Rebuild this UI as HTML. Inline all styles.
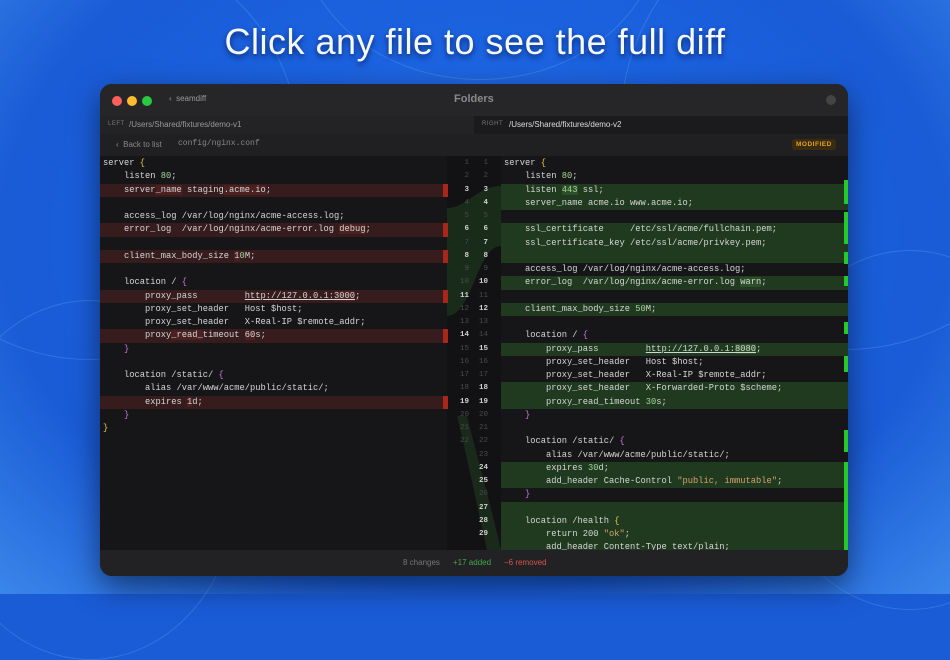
<!DOCTYPE html>
<html><head><meta charset="utf-8"><style>
*{margin:0;padding:0;box-sizing:border-box}
html{background:#1a5bd6}
body{width:950px;height:594px;overflow:hidden;position:relative;font-family:"Liberation Sans",sans-serif;
background:radial-gradient(ellipse at 50% 40%,#2a6fe8 0%,#1b62e0 40%,#1a5bd6 70%,#3a86ea 100%);}
.bgc{position:absolute;border-radius:50%;border:1px solid rgba(120,190,255,.25)}
h1{position:absolute;top:21px;left:0;width:950px;text-align:center;color:#f4f8ff;font-weight:400;font-size:36px;letter-spacing:0.5px;text-shadow:0 3px 6px rgba(0,0,40,.6)}
.win{position:absolute;left:100px;top:84px;width:748px;height:492px;background:#1a1a1c;border-radius:12px;overflow:hidden;box-shadow:0 10px 30px rgba(0,0,0,.5)}
.tb{position:absolute;left:0;top:0;width:748px;height:32px;background:#262628}
.dot{position:absolute;top:12px;width:10px;height:10px;border-radius:50%}
.pb{position:absolute;top:32px;height:18px;left:0;width:748px;background:#232325;font-size:8px;color:#ccc}
.sb{position:absolute;top:50px;height:22px;left:0;width:748px;background:#202022;font-size:8px;color:#888}
.code{position:absolute;top:72px;left:0;width:748px;height:394px;background:#161618;font-family:"Liberation Mono",monospace;font-size:8.75px;color:#d6d6d6}
.r{position:absolute;height:13.25px;line-height:13.25px;white-space:pre}
.L{left:0;width:347px;padding-left:3px}
.R{left:401px;width:347px;padding-left:3px}
.del{background:#361c1c}
.add{background:#1f3a1f}
.n{position:absolute;width:14px;text-align:right;font-size:7.5px;color:#4a4a4e;line-height:13.25px;height:13.25px}
.n1{left:355px}.n2{left:374px}
.b{color:#d0d0d0;font-weight:bold}
.rm{position:absolute;left:343px;width:5px;height:13.25px;background:#a8261c}
.gm{position:absolute;left:744px;width:4px;background:#28c828}
.y{color:#e8c64a}.p{color:#c678dd}.g{color:#a6d49a}.s{color:#d8a070}
.hr{background:#4a2020}.hg{background:#2b4f27}
.ft{position:absolute;top:466px;left:0;width:748px;height:26px;background:#222224;font-size:8px;line-height:26px}
</style></head><body>
<div class="bgc" style="left:-120px;top:-60px;width:420px;height:420px"></div>
<div class="bgc" style="left:620px;top:-100px;width:450px;height:450px"></div>
<div class="bgc" style="left:300px;top:-220px;width:360px;height:300px"></div>
<div class="bgc" style="left:-60px;top:300px;width:300px;height:360px"></div>
<div class="bgc" style="left:760px;top:250px;width:300px;height:360px"></div>
<h1>Click any file to see the full diff</h1>
<div class="win">
<div class="tb">
<div class="dot" style="left:12px;background:#fe5f57"></div>
<div class="dot" style="left:27px;background:#febc2e"></div>
<div class="dot" style="left:42px;background:#28c840"></div>
<div style="position:absolute;left:69px;top:10px;font-size:8px;color:#999">‹&nbsp; seamdiff</div>
<div style="position:absolute;left:354px;top:9px;font-size:11px;font-weight:bold;color:#8a8a8e">Folders</div>
<div style="position:absolute;left:726px;top:11px;width:10px;height:10px;border-radius:50%;background:#444"></div>
</div>
<div class="pb">
<span style="position:absolute;left:8px;top:5px;font-size:6px;color:#777;letter-spacing:.5px">LEFT</span>
<span style="position:absolute;left:29px;top:4px;color:#999">/Users/Shared/fixtures/demo-v1</span>
<div style="position:absolute;left:374px;top:0;width:374px;height:18px;background:#1b1b1d"></div>
<span style="position:absolute;left:382px;top:5px;font-size:6px;color:#777;letter-spacing:.5px">RIGHT</span>
<span style="position:absolute;left:409px;top:4px;color:#ddd">/Users/Shared/fixtures/demo-v2</span>
</div>
<div class="sb">
<span style="position:absolute;left:16px;top:6px">‹&nbsp; Back to list</span>
<span style="position:absolute;left:78px;top:5px;font-family:'Liberation Mono',monospace">config/nginx.conf</span>
<span style="position:absolute;left:692px;top:5px;background:#3a2c10;color:#e8a020;font-size:6.5px;font-weight:bold;padding:2px 4px;border-radius:3px;letter-spacing:.5px">MODIFIED</span>
</div>
<div class="code">
<div style="position:absolute;left:347px;top:0;width:54px;height:394px;background:#121214"></div>
<svg style="position:absolute;left:347px;top:0" width="54" height="394"><path d="M0 52 C20 52 30 30 54 30 L54 90 C30 90 25 160 0 160 Z" fill="#1c331c" opacity=".8"/><path d="M10 260 C20 300 30 350 40 394 L54 394 C44 350 30 300 20 260Z" fill="#1c331c" opacity=".7"/></svg>
<div class="r L" style="top:1px"><span>server </span><span class="y">{</span></div>
<div class="r L" style="top:14.25px">    listen <span class="g">80</span>;</div>
<div class="r L del" style="top:27.5px">    server<span class="hr">_name</span> staging<span class="hr">.acme.io</span>;</div>
<div class="r L" style="top:54px">    access_log /var/log/nginx/acme-access.log;</div>
<div class="r L del" style="top:67.25px">    error_log  /var/log/nginx/acme-error.log <span class="hr">debug</span>;</div>
<div class="r L del" style="top:93.75px">    client_max_body_size <span class="hr">1</span><span class="g">0</span>M;</div>
<div class="r L" style="top:120.25px">    location / <span class="p">{</span></div>
<div class="r L del" style="top:133.5px">        proxy_pass         <u>http://127.0.0.1:<span class="hr">3000</span></u>;</div>
<div class="r L" style="top:146.75px">        proxy_set_header   Host $host;</div>
<div class="r L" style="top:160px">        proxy_set_header   X-Real-IP $remote_addr;</div>
<div class="r L del" style="top:173.25px">        proxy<span class="hr">_read_</span>timeout <span class="hr">60</span>s;</div>
<div class="r L" style="top:186.5px">    <span class="p">}</span></div>
<div class="r L" style="top:213px">    location /static/ <span class="p">{</span></div>
<div class="r L" style="top:226.25px">        alias /var/www/acme/public/static/;</div>
<div class="r L del" style="top:239.5px">        expires <span class="hr">1</span>d;</div>
<div class="r L" style="top:252.75px">    <span class="p">}</span></div>
<div class="r L" style="top:266px"><span class="y">}</span></div>
<div class="rm" style="top:27.5px"></div><div class="rm" style="top:67.25px"></div><div class="rm" style="top:93.75px"></div>
<div class="rm" style="top:133.5px"></div><div class="rm" style="top:173.25px"></div><div class="rm" style="top:239.5px"></div>
<div class="n n1" style="top:1px">1</div><div class="n n2" style="top:1px">1</div>
<div class="n n1" style="top:14.25px">2</div><div class="n n2" style="top:14.25px">2</div>
<div class="n n1 b" style="top:27.5px">3</div><div class="n n2 b" style="top:27.5px">3</div>
<div class="n n1" style="top:40.75px">4</div><div class="n n2 b" style="top:40.75px">4</div>
<div class="n n1" style="top:54px">5</div><div class="n n2" style="top:54px">5</div>
<div class="n n1 b" style="top:67.25px">6</div><div class="n n2 b" style="top:67.25px">6</div>
<div class="n n1" style="top:80.5px">7</div><div class="n n2 b" style="top:80.5px">7</div>
<div class="n n1 b" style="top:93.75px">8</div><div class="n n2 b" style="top:93.75px">8</div>
<div class="n n1" style="top:107px">9</div><div class="n n2" style="top:107px">9</div>
<div class="n n1" style="top:120.25px">10</div><div class="n n2 b" style="top:120.25px">10</div>
<div class="n n1 b" style="top:133.5px">11</div><div class="n n2" style="top:133.5px">11</div>
<div class="n n1" style="top:146.75px">12</div><div class="n n2 b" style="top:146.75px">12</div>
<div class="n n1" style="top:160px">13</div><div class="n n2" style="top:160px">13</div>
<div class="n n1 b" style="top:173.25px">14</div><div class="n n2" style="top:173.25px">14</div>
<div class="n n1" style="top:186.5px">15</div><div class="n n2 b" style="top:186.5px">15</div>
<div class="n n1" style="top:199.75px">16</div><div class="n n2" style="top:199.75px">16</div>
<div class="n n1" style="top:213px">17</div><div class="n n2" style="top:213px">17</div>
<div class="n n1" style="top:226.25px">18</div><div class="n n2 b" style="top:226.25px">18</div>
<div class="n n1 b" style="top:239.5px">19</div><div class="n n2 b" style="top:239.5px">19</div>
<div class="n n1" style="top:252.75px">20</div><div class="n n2" style="top:252.75px">20</div>
<div class="n n1" style="top:266px">21</div><div class="n n2" style="top:266px">21</div>
<div class="n n1" style="top:279.25px">22</div><div class="n n2" style="top:279.25px">22</div>
<div class="n n2" style="top:292.5px">23</div>
<div class="n n2 b" style="top:305.75px">24</div><div class="n n2 b" style="top:319px">25</div>
<div class="n n2" style="top:332.25px">26</div><div class="n n2 b" style="top:345.5px">27</div>
<div class="n n2 b" style="top:358.75px">28</div><div class="n n2 b" style="top:372px">29</div>
<div class="r R" style="top:1px">server <span class="y">{</span></div>
<div class="r R" style="top:14.25px">    listen <span class="g">80</span>;</div>
<div class="r R add" style="top:27.5px">    listen <span class="hg g">443</span> ssl;</div>
<div class="r R add" style="top:40.75px">    server_name acme.io www.acme.io;</div>
<div class="r R add" style="top:67.25px">    ssl_certificate     /etc/ssl/acme/fullchain.pem;</div>
<div class="r R add" style="top:80.5px">    ssl_certificate_key /etc/ssl/acme/privkey.pem;</div>
<div class="r R add" style="top:93.75px"> </div>
<div class="r R" style="top:107px">    access_log /var/log/nginx/acme-access.log;</div>
<div class="r R add" style="top:120.25px">    error_log  /var/log/nginx/acme-error.log <span class="hg">warn</span>;</div>
<div class="r R add" style="top:146.75px">    client_max_body_size <span class="g">50</span>M;</div>
<div class="r R" style="top:173.25px">    location / <span class="p">{</span></div>
<div class="r R add" style="top:186.5px">        proxy_pass         <u>http://127.0.0.1:<span class="hg">8080</span></u>;</div>
<div class="r R" style="top:199.75px">        proxy_set_header   Host $host;</div>
<div class="r R" style="top:213px">        proxy_set_header   X-Real-IP $remote_addr;</div>
<div class="r R add" style="top:226.25px">        proxy_set_header   X-Forwarded-Proto $scheme;</div>
<div class="r R add" style="top:239.5px">        proxy_read_timeout <span class="g">30</span>s;</div>
<div class="r R" style="top:252.75px">    <span class="p">}</span></div>
<div class="r R" style="top:279.25px">    location /static/ <span class="p">{</span></div>
<div class="r R" style="top:292.5px">        alias /var/www/acme/public/static/;</div>
<div class="r R add" style="top:305.75px">        expires <span class="g">30</span>d;</div>
<div class="r R add" style="top:319px">        add_header Cache-Control <span class="s">"public, immutable"</span>;</div>
<div class="r R" style="top:332.25px">    <span class="p">}</span></div>
<div class="r R add" style="top:345.5px"> </div>
<div class="r R add" style="top:358.75px">    location /health <span class="y">{</span></div>
<div class="r R add" style="top:372px">        return 200 <span class="s">"ok"</span>;</div>
<div class="r R add" style="top:385.25px">        add_header Content-Type text/plain;</div>
<div class="gm" style="top:24px;height:24px"></div>
<div class="gm" style="top:56px;height:32px"></div>
<div class="gm" style="top:96px;height:12px"></div>
<div class="gm" style="top:120px;height:10px"></div>
<div class="gm" style="top:166px;height:12px"></div>
<div class="gm" style="top:200px;height:16px"></div>
<div class="gm" style="top:274px;height:22px"></div>
<div class="gm" style="top:306px;height:88px"></div>
</div>
<div class="ft">
<span style="position:absolute;left:303px;color:#777">8 changes</span>
<span style="position:absolute;left:353px;color:#3fa84a">+17 added</span>
<span style="position:absolute;left:404px;color:#d9534f">−6 removed</span>
</div>
</div>
</body></html>
